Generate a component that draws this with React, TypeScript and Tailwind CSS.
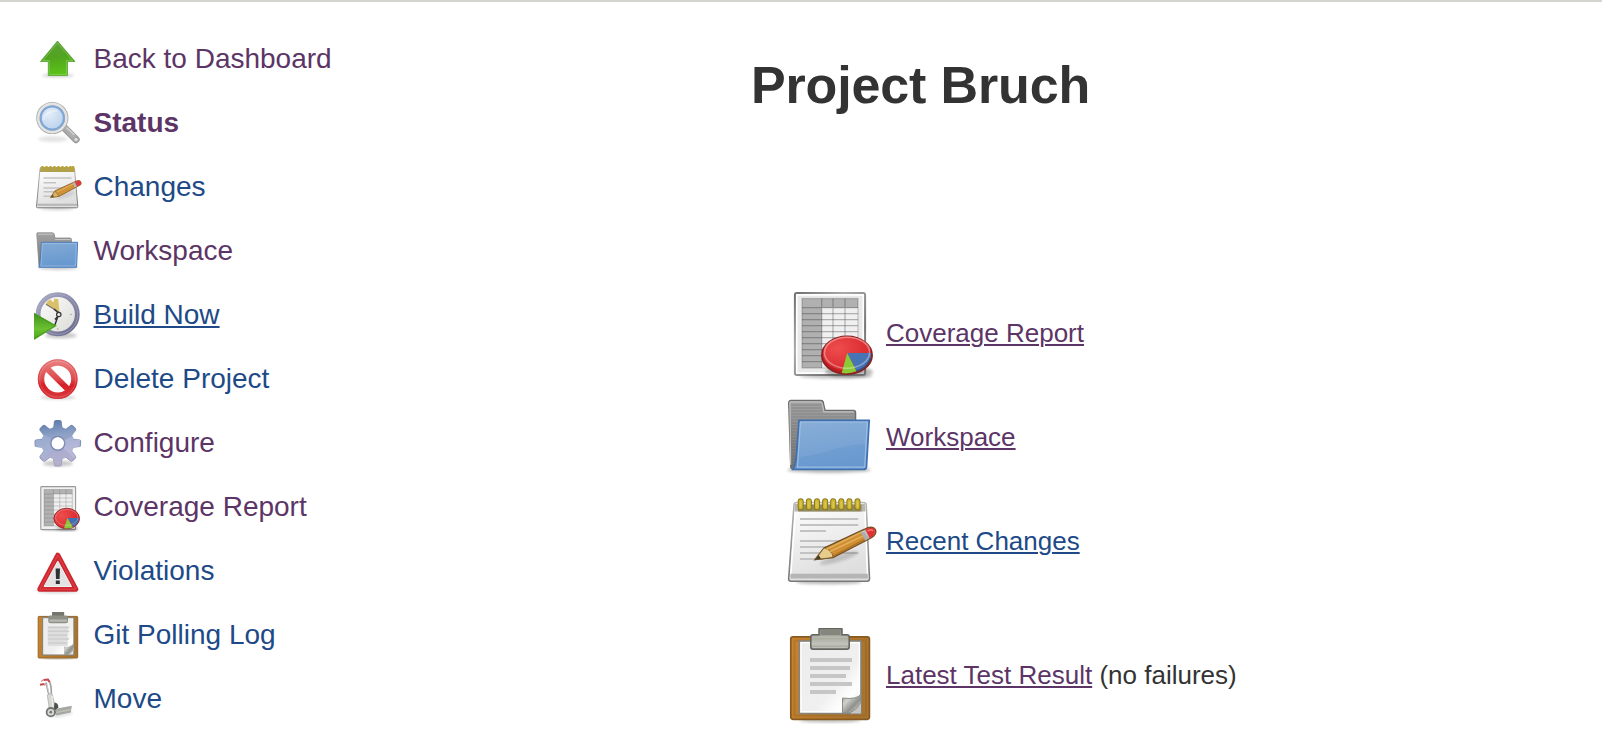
import type { ReactNode } from "react";

type IconProps = { className?: string };

function Svg({ size, className, children }: { size: number; className?: string; children: ReactNode }) {
  return (
    <svg viewBox={`0 0 ${size} ${size}`} className={className} fill="none" aria-hidden="true">
      {children}
    </svg>
  );
}

/* Gradients and filters shared by all icons. */
function Defs() {
  return (
    <svg className="absolute h-0 w-0" aria-hidden="true">
      <defs>
        <filter id="soft" x="-30%" y="-200%" width="160%" height="500%">
          <feGaussianBlur stdDeviation="1.6" />
          <feComponentTransfer>
            <feFuncA type="linear" slope="0.55" />
          </feComponentTransfer>
        </filter>
        <linearGradient id="paper" x1="0" y1="0" x2="0.3" y2="1">
          <stop offset="0" stopColor="#fff" />
          <stop offset="1" stopColor="#dedede" />
        </linearGradient>
        <linearGradient id="sheet" x1="0" y1="0" x2="1" y2="1">
          <stop offset="0" stopColor="#ececec" />
          <stop offset="0.6" stopColor="#f0f0f0" />
          <stop offset="0.8" stopColor="#fff" />
          <stop offset="1" stopColor="#ddd" />
        </linearGradient>
        <linearGradient id="edge" x1="0" y1="0" x2="1" y2="1">
          <stop offset="0" stopColor="#707070" />
          <stop offset="0.35" stopColor="#aaa" />
          <stop offset="0.7" stopColor="#777" />
          <stop offset="1" stopColor="#999" />
        </linearGradient>
        <linearGradient id="padEdge" x1="0" y1="0" x2="0" y2="1">
          <stop offset="0" stopColor="#b8b8b8" />
          <stop offset="1" stopColor="#777" />
        </linearGradient>
        <linearGradient id="blue" x1="0" y1="0" x2="0.2" y2="1">
          <stop offset="0" stopColor="#83aad6" />
          <stop offset="1" stopColor="#6798cf" />
        </linearGradient>
        <linearGradient id="grey" x1="0" y1="0" x2="0" y2="1">
          <stop offset="0" stopColor="#a3a3a3" />
          <stop offset="1" stopColor="#747474" />
        </linearGradient>
        <linearGradient id="wood" x1="0" y1="0" x2="1" y2="0.3">
          <stop offset="0" stopColor="#c9842d" />
          <stop offset="1" stopColor="#a8732d" />
        </linearGradient>
        <linearGradient id="clip" x1="0" y1="0" x2="0" y2="1">
          <stop offset="0" stopColor="#8b8d84" />
          <stop offset="0.5" stopColor="#aeb0a5" />
          <stop offset="0.75" stopColor="#c3c4bb" />
          <stop offset="1" stopColor="#929389" />
        </linearGradient>
        <linearGradient id="curl" x1="0" y1="0" x2="1" y2="1">
          <stop offset="0" stopColor="#8f918c" />
          <stop offset="0.3" stopColor="#d0d0cd" />
          <stop offset="0.6" stopColor="#8f918c" />
          <stop offset="1" stopColor="#e8e8e8" />
        </linearGradient>
        <linearGradient id="green" x1="0.5" y1="0" x2="0.6" y2="1">
          <stop offset="0" stopColor="#5d9f3a" />
          <stop offset="0.45" stopColor="#51a41f" />
          <stop offset="1" stopColor="#5cc518" />
        </linearGradient>
        <linearGradient id="play" x1="0" y1="0" x2="0" y2="1">
          <stop offset="0" stopColor="#3f8f1c" />
          <stop offset="0.6" stopColor="#6bc231" />
          <stop offset="1" stopColor="#4aa01c" />
        </linearGradient>
        <linearGradient id="noRed" gradientUnits="userSpaceOnUse" x1="0" y1="3" x2="0" y2="43">
          <stop offset="0" stopColor="#ea8585" />
          <stop offset="0.5" stopColor="#de4a4d" />
          <stop offset="0.65" stopColor="#d61f26" />
          <stop offset="1" stopColor="#d93a3e" />
        </linearGradient>
        <radialGradient id="pie" cx="0.3" cy="0.35" r="0.8">
          <stop offset="0" stopColor="#ee4d4d" />
          <stop offset="1" stopColor="#d5222a" />
        </radialGradient>
        <radialGradient id="lens" cx="0.4" cy="0.35" r="0.7">
          <stop offset="0" stopColor="#e3edf8" />
          <stop offset="1" stopColor="#b3cdea" />
        </radialGradient>
        <linearGradient id="gear" x1="0.4" y1="0" x2="0.55" y2="1">
          <stop offset="0" stopColor="#5c7cab" />
          <stop offset="0.3" stopColor="#8b9fc5" />
          <stop offset="0.6" stopColor="#a9acd0" />
          <stop offset="1" stopColor="#b9b2cc" />
        </linearGradient>
        <linearGradient id="rim" x1="0" y1="0" x2="1" y2="1">
          <stop offset="0" stopColor="#a9aac5" />
          <stop offset="1" stopColor="#69698a" />
        </linearGradient>
        <linearGradient id="face" x1="0" y1="0" x2="1" y2="1">
          <stop offset="0" stopColor="#fff" />
          <stop offset="1" stopColor="#d9d9d5" />
        </linearGradient>
        <linearGradient id="handle" x1="0" y1="1" x2="1" y2="0">
          <stop offset="0" stopColor="#8c8c8c" />
          <stop offset="0.5" stopColor="#b0b0b0" />
          <stop offset="1" stopColor="#929292" />
        </linearGradient>
      </defs>
    </svg>
  );
}

function UpArrow({ className }: IconProps) {
  return (
    <Svg size={48} className={className}>
      <ellipse cx="24" cy="39.5" rx="16" ry="1.8" fill="#000" opacity="0.35" filter="url(#soft)" />
      <path d="M23.5 5 41 25.5H33.5V39.5H14.3V25.5H6.5Z" fill="url(#green)" stroke="#4f9a2a" strokeOpacity="0.7" />
      <path d="M23.5 7 38.5 24.5H32.5V38.5H15.3V24.5H9Z" stroke="#9ede6e" strokeOpacity="0.45" />
    </Svg>
  );
}

function Magnifier({ className }: IconProps) {
  return (
    <Svg size={48} className={className}>
      <ellipse cx="19" cy="39" rx="15" ry="3" fill="#000" opacity="0.2" filter="url(#soft)" />
      <path d="m30 27.5 12 12" stroke="#9a9a9a" strokeWidth="7.4" strokeLinecap="round" />
      <path d="m30 27.5 12 12" stroke="url(#handle)" strokeWidth="5.8" strokeLinecap="round" />
      <path d="m32.5 27.5 8 7.5" stroke="#d5d5d5" strokeWidth="1.3" />
      <circle cx="42" cy="39.6" r="2.2" fill="#ddd" stroke="#999" strokeWidth="0.8" />
      <circle cx="18.3" cy="18" r="14" fill="url(#lens)" stroke="#aeb0ae" strokeWidth="4.2" />
      <circle cx="18.3" cy="18" r="14" stroke="#e4e4e4" strokeWidth="2.4" />
      <circle cx="18.3" cy="18" r="11.6" stroke="#7fa6d5" strokeWidth="2" />
      <path d="M9.5 20c1-6 5-9 14-9.5" stroke="#fff" strokeWidth="2" strokeOpacity="0.35" />
    </Svg>
  );
}

function NotepadSmall({ className }: IconProps) {
  return (
    <Svg size={48} className={className}>
      <ellipse cx="23" cy="44.5" rx="17" ry="1.5" fill="#000" opacity="0.4" filter="url(#soft)" />
      <path d="M6 4.5H40.5L43.8 42.5Q43.8 43.8 42.5 43.8H3.6Q2.4 43.8 2.5 42.5Z" fill="url(#paper)" stroke="url(#padEdge)" />
      <path d="M3.5 40.8H43" stroke="#b5b5b5" strokeWidth="2" />
      <path d="M6.3 3H40.4L40.8 8H6Z" fill="#a99f60" />
      {[8.5, 12.5, 16.5, 20.5, 24.5, 28.5, 32.5, 36.5, 39].map((x) => (
        <path key={x} d={`M${x} 2V7.5`} stroke="#bca333" strokeWidth="2.2" />
      ))}
      <g stroke="#c3c3c3" strokeWidth="1.6">
        <path d="M9.5 14H37.5M9.5 18.8H22M9.5 24H32M9.5 27.8H24M9.5 32.3H18" />
      </g>
      <ellipse cx="32" cy="31" rx="10" ry="1.7" fill="#000" opacity="0.25" filter="url(#soft)" transform="rotate(-20 32 31)" />
      <path d="M16.7 33.5 20.8 27 42 17.2Q46 15.5 47 18.2T45 21.7L25.2 32.3Z" fill="#cf9138" stroke="#8f6428" strokeWidth="0.9" />
      <path d="m16.7 33.5 4.1-6.5 4.4 5.3Z" fill="#d8b470" stroke="#8f6428" strokeWidth="0.6" />
      <path d="m16.7 33.5 1.8-2.9 1.6 1.8Z" fill="#5e4e32" />
      <path d="m23 28 16-8" stroke="#e7b763" />
      <path d="m40 18.3 2.1-1Q46 15.5 46.9 18.2T45 21.4L42 23Z" fill="#dd3b3d" />
      <path d="m38.6 19 2.2-1 2.2 4.4-2.2 1.1Z" fill="#b5b5b5" />
    </Svg>
  );
}

function FolderSmall({ className }: IconProps) {
  return (
    <Svg size={48} className={className}>
      <ellipse cx="24" cy="40" rx="20" ry="1.5" fill="#000" opacity="0.5" filter="url(#soft)" />
      <path d="M3.5 4.8H18.5Q20 4.8 20.3 6.5L21 10H36Q37.5 10 37.5 11.5V38H5L2.8 6Q2.7 4.8 3.5 4.8Z" fill="url(#grey)" stroke="#888" strokeWidth="0.8" />
      <path d="M4 6.2H18.8M21 11.5H36.5" stroke="#c4c4c4" strokeWidth="1" />
      <path d="M7.3 14.3H43.6L42.6 39.3H4.8Q6.8 35 7.3 14.3Z" fill="url(#blue)" stroke="#4c7db9" />
      <path d="M8.4 15.5H42.4L41.5 38H7Z" stroke="#a7c5e8" strokeOpacity="0.6" />
    </Svg>
  );
}

function ClockPlay({ className }: IconProps) {
  return (
    <Svg size={48} className={className}>
      <ellipse cx="27" cy="43.5" rx="16" ry="3" fill="#000" opacity="0.4" filter="url(#soft)" />
      <circle cx="23.7" cy="22.3" r="19.6" fill="url(#face)" stroke="url(#rim)" strokeWidth="4.8" />
      <circle cx="23.7" cy="22.3" r="20" stroke="#b9bad0" strokeWidth="0.9" strokeOpacity="0.5" />
      <path d="M25.5 20.5 11.5 12.2Q12.8 9 16 7.2L19.5 10.5 20.2 6.7 24.2 7Z" fill="#d9c069" />
      <path d="m25 20.3-13-8" stroke="#777" strokeWidth="1.1" />
      <path d="m25 21.5-5-4.5M24 24l-3.5 10M21 27.5l4-4.5" stroke="#333" strokeWidth="1.5" />
      <circle cx="24.8" cy="22.5" r="2.2" fill="#eee" stroke="#333" strokeWidth="1.2" />
      <circle cx="37" cy="22.5" r="0.8" fill="#aaa" />
      <circle cx="23.7" cy="37" r="0.8" fill="#aaa" />
      <path d="M0 20.7 23 33.8 0 48Z" fill="url(#play)" />
      <path d="M0.5 22 21 33.8 0.5 46.5" stroke="#479520" strokeWidth="0.9" />
    </Svg>
  );
}

function NoEntry({ className }: IconProps) {
  return (
    <Svg size={48} className={className}>
      <ellipse cx="24" cy="41.5" rx="18" ry="1.8" fill="#000" opacity="0.35" filter="url(#soft)" />
      <circle cx="23.7" cy="23.1" r="16.7" stroke="url(#noRed)" strokeWidth="6.5" />
      <path d="M12.5 12 35 34.4" stroke="url(#noRed)" strokeWidth="6" />
      <circle cx="23.7" cy="23.1" r="19.4" stroke="#cb3338" strokeWidth="0.7" strokeOpacity="0.5" />
      <circle cx="23.7" cy="23.1" r="18" stroke="#fff" strokeWidth="0.6" strokeOpacity="0.3" />
    </Svg>
  );
}

function Gear({ className }: IconProps) {
  const tooth = "M19 9 20 1.5Q20.2 0 22 0H25.6Q27.4 0 27.6 1.5L28.6 9Z";
  return (
    <Svg size={48} className={className}>
      <ellipse cx="24" cy="43.5" rx="15" ry="3" fill="#000" opacity="0.4" filter="url(#soft)" />
      <mask id="gearShape" maskUnits="userSpaceOnUse" x="0" y="0" width="48" height="48">
        <circle cx="23.8" cy="23.3" r="16.5" fill="#fff" />
        {[0, 45, 90, 135, 180, 225, 270, 315].map((a) => (
          <path key={a} d={tooth} fill="#fff" transform={`rotate(${a} 23.8 23.3)`} />
        ))}
        <circle cx="23.8" cy="23.3" r="6.2" fill="#000" />
      </mask>
      <g mask="url(#gearShape)">
        <rect width="48" height="48" fill="url(#gear)" />
        <path d="M0 8 24 23 6 42 0 48Z" fill="#a5b9d6" opacity="0.45" />
        <path d="M48 12 24 23 42 40Z" fill="#c6c8e6" opacity="0.4" />
        {[0, 45, 90, 135, 180, 225, 270, 315].map((a) => (
          <path key={a} d="M19.3 7.5 20 1Q20.3.4 22 .4H25.6Q27.3.4 27.6 1.5L28.3 7.5" stroke="#66799e" strokeWidth="1" strokeOpacity="0.6" transform={`rotate(${a} 23.8 23.3)`} />
        ))}
      </g>
      <circle cx="23.8" cy="23.3" r="7" stroke="#7c8bb0" strokeWidth="1.2" />
    </Svg>
  );
}

function ReportSmall({ className }: IconProps) {
  return (
    <Svg size={48} className={className}>
      <ellipse cx="26" cy="45.5" rx="18" ry="1.5" fill="#000" opacity="0.35" filter="url(#soft)" />
      <rect x="6.8" y="2.6" width="34.8" height="43" rx="0.8" fill="#f0f0f0" stroke="#999" strokeWidth="1.1" />
      <rect x="10" y="5.5" width="28.3" height="36.5" fill="#eee" />
      <path d="M10 5.5H38.3V10H19.5V42H10Z" fill="#b2b2b2" />
      <g stroke="#666" strokeOpacity="0.32" strokeWidth="0.9">
        <path d="M10 10H38.3M10 14H38.3M10 18H38.3M10 22H38.3M10 26H38.3M10 30H38.3M10 34H38.3M10 38H38.3M19.5 5.5V42M25.8 5.5V42M32 5.5V42" />
        <rect x="10" y="5.5" width="28.3" height="36.5" />
      </g>
      <ellipse cx="33" cy="44.5" rx="11" ry="2" fill="#000" opacity="0.5" filter="url(#soft)" />
      <ellipse cx="32.7" cy="34.5" rx="12.8" ry="10.2" fill="url(#pie)" stroke="#9c2c2c" strokeWidth="1" />
      <path d="M33.5 34H45Q45 39.5 39.5 43Z" fill="#416fb0" />
      <path d="M33.5 34 39 43.4Q35 44.8 30 44.3Z" fill="#8cc63a" />
      <ellipse cx="32.7" cy="33.4" rx="11.2" ry="8" stroke="#fff" strokeOpacity="0.25" strokeWidth="1" />
    </Svg>
  );
}

function Warning({ className }: IconProps) {
  return (
    <Svg size={48} className={className}>
      <ellipse cx="24" cy="43.5" rx="21" ry="1.8" fill="#000" opacity="0.3" filter="url(#soft)" />
      <path d="M23.8 7.2 41.8 41.2H5.8Z" fill="#d6212a" stroke="#cc2830" strokeWidth="5" strokeLinejoin="round" />
      <path d="M23.8 7.2 41.8 41.2H5.8Z" stroke="#dc3a40" strokeWidth="1.4" strokeLinejoin="round" />
      <path d="M23.8 13 37.5 38.5H10Z" fill="#e3e3e3" stroke="#f2f2f2" strokeWidth="1" strokeLinejoin="round" />
      <path d="M21.6 20.5H26L25.6 31H22ZM21.8 32.4H25.8V36H21.8Z" fill="#2e3234" />
    </Svg>
  );
}

function ClipboardSmall({ className }: IconProps) {
  return (
    <Svg size={48} className={className}>
      <ellipse cx="24" cy="46.3" rx="16" ry="1.2" fill="#000" opacity="0.5" filter="url(#soft)" />
      <rect x="4.2" y="4.4" width="39.5" height="41.6" rx="0.8" fill="url(#wood)" stroke="#96662a" strokeWidth="1" />
      <rect x="8.6" y="5.6" width="31.3" height="37.4" fill="url(#sheet)" stroke="#85827a" strokeWidth="1.1" />
      <rect x="13.8" y="14" width="20" height="20" fill="#dadada" opacity="0.8" />
      <path d="M13.8 15.5H35M13.8 19.3H35M13.8 23.2H33M13.8 27H35M13.8 31H33" stroke="#cdcdcd" strokeWidth="1.5" />
      <path d="M30 34.5Q37 35.5 40 31V38L35 43H30Z" fill="url(#curl)" />
      <path d="M18 3.5V0H30.2V3.5H32Q34 3.5 34 5.5V9.5Q34 11.3 32 11.3H16.3Q14.3 11.3 14.3 9.5V5.5Q14.3 3.5 16.3 3.5Z" fill="#8e9087" />
      <path d="M15.5 7.5H33V9.8H15.5Z" fill="#b7b8ae" />
      <path d="M18.2 0H30V3.5H18.2Z" fill="#74766e" />
    </Svg>
  );
}

function HandTruck({ className }: IconProps) {
  return (
    <Svg size={48} className={className}>
      <path d="m16 39 8 1 14-3.5" stroke="#000" strokeWidth="2" opacity="0.35" filter="url(#soft)" />
      <path d="M12 6.5 14.7 18M15.5 5.5Q17.5 10 17.3 18" stroke="#a0a2a0" strokeWidth="1.7" />
      <path d="M12.8 8 15 17" stroke="#e2e2e2" strokeWidth="0.7" />
      <path d="m6 8.8 4.5-.8M9.5 4 14 3.5 15.5 6" stroke="#c9444b" strokeWidth="2" />
      <path d="m7 5.5 2.5-1.8M10 9.2l2-.8" stroke="#dd8e92" strokeWidth="1.2" />
      <path d="M13.3 19 18 17.6 21 30 21.5 36 15.5 34Z" fill="#d6d8d2" stroke="#a8aba6" strokeWidth="0.7" />
      <path d="m18 20 1 12" stroke="#eff0ec" strokeWidth="1.2" />
      <path d="M20.5 26.5Q24.5 27 24.3 31.5L22 34 19.8 33Z" fill="#4e514d" />
      <path d="m20 35.2 4.2-3L37.8 29.7 36.8 36.6 22.5 39.4Z" fill="#a5a8a1" />
      <path d="m22 36.5 15-3" stroke="#bcbfb7" strokeWidth="1.3" />
      <circle cx="16.8" cy="36.2" r="4.2" fill="#d8d8d5" stroke="#727673" strokeWidth="1.8" />
      <circle cx="16.8" cy="36.2" r="1.4" fill="#777" />
    </Svg>
  );
}

function Report({ className }: IconProps) {
  return (
    <Svg size={96} className={className}>
      <ellipse cx="54" cy="90" rx="37" ry="2.6" fill="#000" opacity="0.45" filter="url(#soft)" />
      <rect x="12.9" y="7" width="70.2" height="82" rx="2" fill="#e9e9e9" stroke="url(#edge)" strokeWidth="2" />
      <rect x="14.8" y="8.9" width="66.4" height="78.2" stroke="#fff" strokeWidth="1.6" />
      <rect x="20" y="12.5" width="56" height="69.5" fill="#f0f0f0" />
      <path d="M20 12.5H76V21.7H39.7V82H20Z" fill="#b0b0b0" />
      <g stroke="#333" strokeOpacity="0.34" strokeWidth="1.2">
        <path d="M20 21.7H76M39.7 12.5V82M51 12.5V82M63 12.5V82" />
        {[27.7, 33.7, 39.7, 45.7, 51.7, 57.7, 63.7, 69.7, 75.7].map((y) => (
          <path key={y} d={`M20 ${y}H76`} />
        ))}
        <rect x="20" y="12.5" width="56" height="69.5" strokeOpacity="0.25" />
      </g>
      <ellipse cx="67" cy="86" rx="24" ry="5.5" fill="#000" opacity="0.5" filter="url(#soft)" />
      <ellipse cx="65" cy="69.2" rx="25.2" ry="19" fill="#bd1d20" stroke="#872020" strokeWidth="1.5" />
      <ellipse cx="65" cy="67.6" rx="24" ry="17" fill="url(#pie)" />
      <path d="M65.2 67H89.2Q89 79 74.5 85.3Z" fill="#4674b4" />
      <path d="M65.2 67 74.5 85.3Q67 88.3 59.7 87Z" fill="#8acb35" />
      <path d="M88.7 72Q85 82 74 85.3" stroke="#324f79" strokeWidth="1.4" />
      <ellipse cx="65" cy="66.7" rx="22.5" ry="15.5" stroke="#fff" strokeOpacity="0.35" strokeWidth="1.5" />
      <path d="M42.5 66Q45 53 65 51.3 86 52 88 65" stroke="#ff8c85" strokeOpacity="0.35" strokeWidth="1.5" />
    </Svg>
  );
}

function Folder({ className }: IconProps) {
  return (
    <Svg size={96} className={className}>
      <ellipse cx="47" cy="80" rx="42" ry="3" fill="#000" opacity="0.5" filter="url(#soft)" />
      <path d="M9 10.5H39Q41 10.5 41.3 13L43 20.5H71.5Q73.5 20.5 73.5 22.5V79H10.5Q9 79 8.8 77L6.8 13Q6.7 10.5 9 10.5Z" fill="url(#grey)" stroke="#6c6c6c" strokeWidth="1.5" />
      <path d="M8.7 75 7.9 12.5Q8 11.8 9 11.8H38.5Q39.8 12 40.3 14L42 21.8H72" stroke="#c1c1c1" strokeWidth="1.2" />
      <g stroke="#595959" strokeOpacity="0.28" strokeWidth="1.2">
        {[15, 18, 21].map((y) => (
          <path key={y} d={`M9 ${y}H40`} />
        ))}
        {[24, 27, 30].map((y) => (
          <path key={y} d={`M9 ${y}H72`} />
        ))}
        {[33, 36, 39, 42, 45, 48, 51, 54, 57, 60, 63, 66, 69, 72, 75].map((y) => (
          <path key={y} d={`M9 ${y}H18`} />
        ))}
      </g>
      <path d="M17 30.3H87.2L84.5 77Q84 79.5 81.5 79.5H11Q14 75 14.5 65Z" fill="url(#blue)" stroke="#3f70b0" strokeWidth="1.7" />
      <path d="M18.5 32H85.3L82.7 77.2H15.5Z" stroke="#a8c5e7" strokeWidth="1.2" strokeOpacity="0.8" />
      <path d="M19 32.5H84.6L83.5 54Q63 55 47 60.5T17.3 67Z" fill="#fff" opacity="0.06" />
    </Svg>
  );
}

function Notepad({ className }: IconProps) {
  return (
    <Svg size={96} className={className}>
      <ellipse cx="47" cy="88" rx="33" ry="2.3" fill="#000" opacity="0.5" filter="url(#soft)" />
      <path d="M14.5 8.5H81.5Q84 8.5 84.2 11L87.5 84.5Q87.5 87.3 85 87.3H9Q6.4 87.3 6.7 84.5L12 11Q12.2 8.5 14.5 8.5Z" fill="url(#paper)" stroke="url(#padEdge)" strokeWidth="1.6" />
      <path d="M13.5 17 8.5 84.5M83 17 85.6 84.5" stroke="#fff" strokeWidth="1.5" />
      <path d="M8.5 79.8H85.8L86 84.5H8.2Z" fill="#b5b5b5" />
      <path d="M13 10H82.8L83.2 17.5H12.5Z" fill="#b9b7ab" />
      <path d="M16 11H79.5V17.5H16Z" fill="#928b60" />
      {[18.7, 26.9, 35, 43.1, 51.2, 59.3, 67.4, 75.5].map((x) => (
        <g key={x}>
          <rect x={x - 3} y="4.3" width="6" height="12" rx="3" fill="#8b7919" />
          <rect x={x - 2} y="5.2" width="4" height="10" rx="2" fill="#d0b832" />
          <path d={`M${x} 7.5V13`} stroke="#dccb58" strokeWidth="1.1" />
        </g>
      ))}
      <path d="M18 25H76.3M18 31H76.3M18 37H44M18 47H60M18 53H60M18 59H76.3M18 65H41" stroke="#c2c2c2" strokeWidth="2" />
      <ellipse cx="57" cy="64" rx="20" ry="3.5" fill="#000" opacity="0.3" filter="url(#soft)" transform="rotate(-17 57 64)" />
      <path d="M33 65.7 42 54 82 35.5Q90 31 93.2 35.4 95.5 40 89 44L51 63.5 46.5 64Z" fill="#cf8e31" stroke="#755126" strokeWidth="1.4" />
      <path d="m33 65.7 9-11.7Q47 54 48 57.5 51 59 51 63.3L46.5 64Z" fill="#e8cc8b" stroke="#755126" strokeWidth="0.8" />
      <path d="m33 65.7 3.6-4.7 2.5 3.7Z" fill="#483f2b" />
      <path d="m44 55.5 37-18M48 57.5l34-16" stroke="#e3ae58" strokeWidth="1.4" />
      <path d="M51 62 84 44.8" stroke="#ac7021" strokeWidth="1.4" />
      <path d="m78.5 38 5-2.3 4.7 8-5 2.8Z" fill="#adadad" />
      <path d="m80 38.2 2.5-1.2 3 5.3" stroke="#ccc" strokeWidth="1" />
      <path d="m83.5 35.6 2-.9Q90.5 32.5 92.6 36 94 40 89 43.4L87.7 44Z" fill="#e52f35" />
      <path d="M85.5 37Q89 35 91 36.7" stroke="#f88" strokeWidth="1.3" />
    </Svg>
  );
}

function Clipboard({ className }: IconProps) {
  return (
    <Svg size={96} className={className}>
      <ellipse cx="48" cy="92.5" rx="31" ry="2" fill="#000" opacity="0.5" filter="url(#soft)" />
      <rect x="8.8" y="8.8" width="78.6" height="82.5" rx="2.2" fill="url(#wood)" stroke="#885a22" strokeWidth="1.7" />
      <path d="M12.5 12.5H84V87.5H12.5Z" stroke="#915f21" strokeOpacity="0.35" strokeWidth="2" />
      <rect x="17.3" y="13" width="61.7" height="72.5" fill="url(#sheet)" stroke="#85837c" strokeWidth="1.6" />
      <rect x="19" y="14.7" width="58.3" height="69" stroke="#fff" strokeWidth="1.2" />
      <path d="M28 32H70M28 40H68M28 48H64M28 56H70M28 64H54" stroke="#c6c6c6" strokeWidth="4" />
      <path d="M60.5 70Q75 72 79 66V75Q74 83 68 85H60.5Z" fill="url(#curl)" stroke="#898b86" strokeWidth="1" />
      <path d="M79 75V85.5H68Q74 83 79 75Z" fill="#c5c6c2" />
      <path d="M37 6.7V1Q37 .5 38 .5H59Q60 .5 60 1V6.7H65Q67.2 6.7 67.2 9V19Q67.2 21.2 65 21.2H31Q28.8 21.2 28.8 19V9Q28.8 6.7 31 6.7Z" fill="url(#clip)" stroke="#62645e" strokeWidth="1.5" />
      <path d="M38.5 2.2H58.5V7H38.5Z" fill="#85877e" />
      <path d="M30.3 9H65.7M30.5 19.5H65.5" stroke="#c6c7be" strokeWidth="1" strokeOpacity="0.8" />
    </Svg>
  );
}

type Task = { label: string; Icon: (p: IconProps) => ReactNode; style: string };

const VISITED = "text-[#5c3566]";
const LINK = "text-[#204a87]";

const tasks: Task[] = [
  { label: "Back to Dashboard", Icon: UpArrow, style: VISITED },
  { label: "Status", Icon: Magnifier, style: "font-bold text-[#5c3566]" },
  { label: "Changes", Icon: NotepadSmall, style: LINK },
  { label: "Workspace", Icon: FolderSmall, style: VISITED },
  { label: "Build Now", Icon: ClockPlay, style: "text-[#204a87] underline" },
  { label: "Delete Project", Icon: NoEntry, style: LINK },
  { label: "Configure", Icon: Gear, style: VISITED },
  { label: "Coverage Report", Icon: ReportSmall, style: VISITED },
  { label: "Violations", Icon: Warning, style: LINK },
  { label: "Git Polling Log", Icon: ClipboardSmall, style: LINK },
  { label: "Move", Icon: HandTruck, style: LINK },
];

type Entry = Task & { row: string; note?: string };

const entries: Entry[] = [
  { label: "Coverage Report", Icon: Report, style: VISITED, row: "" },
  { label: "Workspace", Icon: Folder, style: VISITED, row: "mt-2" },
  { label: "Recent Changes", Icon: Notepad, style: LINK, row: "mt-2" },
  { label: "Latest Test Result", Icon: Clipboard, style: VISITED, row: "mt-[38px]", note: "(no failures)" },
];

export default function App() {
  return (
    <div className="flex h-[754px] w-full overflow-hidden border-t-2 border-[#d3d7cf] bg-white font-['Liberation_Sans',Arial,sans-serif] text-[#333]">
      <Defs />
      <nav className="w-[751px] shrink-0 pt-[34px] pl-[34px]">
        <ul className="flex flex-col gap-4">
          {tasks.map(({ label, Icon, style }) => (
            <li key={label} className="flex h-12 items-center gap-[11.5px]">
              <Icon className="h-12 w-12 shrink-0 blur-[0.4px]" />
              <a href="#" className={`pb-0.5 text-[28px] leading-8 decoration-2 underline-offset-[2px] ${style}`}>
                {label}
              </a>
            </li>
          ))}
        </ul>
      </nav>
      <main className="grow pt-[53px]">
        <h1 className="text-[52px] leading-[60px] font-bold tracking-[-0.15px]">Project Bruch</h1>
        <div className="mt-[171px] pl-[31px]">
          {entries.map(({ label, Icon, style, row, note }) => (
            <div key={label} className={`flex h-24 items-center gap-2 ${row}`}>
              <Icon className="h-24 w-24 shrink-0 blur-[0.4px]" />
              <p className="pb-0.5 text-[26px] leading-[30px]">
                <a href="#" className={`underline decoration-2 underline-offset-[2px] ${style}`}>
                  {label}
                </a>
                {note && <span> {note}</span>}
              </p>
            </div>
          ))}
        </div>
      </main>
    </div>
  );
}
